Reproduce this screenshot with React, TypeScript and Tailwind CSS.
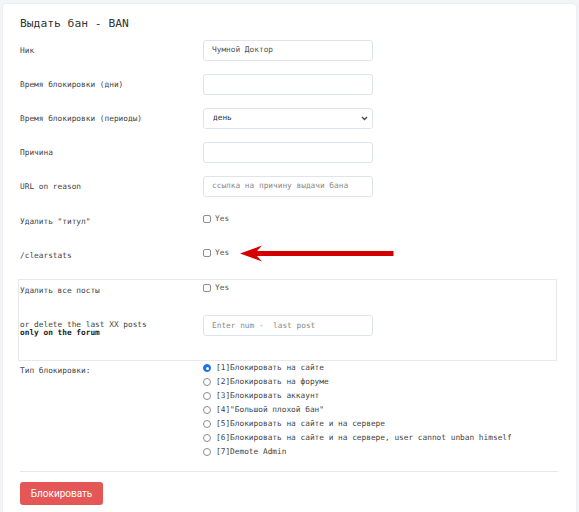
import React from "react";

const mono = "font-['DejaVu_Sans_Mono','Liberation_Mono',monospace]";

const banTypes = [
  "[1]Блокировать на сайте",
  "[2]Блокировать на форуме",
  "[3]Блокировать аккаунт",
  "[4]\"Большой плохой бан\"",
  "[5]Блокировать на сайте и на сервере",
  "[6]Блокировать на сайте и на сервере, user cannot unban himself",
  "[7]Demote Admin",
];

function Field({ value, placeholder }: { value?: string; placeholder?: string }) {
  return (
    <div className="w-[170px] h-[21px] border border-[#dfe3ea] rounded-[3px] bg-white flex items-center pl-[8px]">
      {value ? (
        <span className="text-[#555]">{value}</span>
      ) : placeholder ? (
        <span className="text-[#8a8a8a] whitespace-pre">{placeholder}</span>
      ) : null}
    </div>
  );
}

function Check() {
  return (
    <div className="flex items-center gap-[4px] h-[10px] leading-[10px]">
      <span className="w-[8px] h-[8px] border border-[#8d8d8d] rounded-[2px] bg-white" />
      <span className="text-[#555]">Yes</span>
    </div>
  );
}

function Row({ label, children, check }: { label: string; children: React.ReactNode; check?: boolean }) {
  return (
    <div className="grid grid-cols-[183px_1fr] h-[34px] items-center">
      <span className={check ? "mt-[4px] text-[#444]" : "mt-[1px] text-[#444]"}>{label}</span>
      <div className={check ? "-mt-[2px]" : ""}>{children}</div>
    </div>
  );
}

export default function App() {
  return (
    <div className={`relative min-h-screen bg-[#f3f4f7] pt-[3px] px-[2px] ${mono} text-[7.8px]`}>
      <div className="bg-white w-[575px] border border-[#eceef2] rounded-[4px] pl-[17px] pr-[18px] pt-[7px] pb-[10px]">
        <h1 className="h-[22px] leading-[22px] text-[11.3px] text-[#333] mt-[2px] -mb-[2px]">Выдать бан - BAN</h1>

        <Row label="Ник">
          <Field value="Чумной Доктор" />
        </Row>
        <Row label="Время блокировки (дни)">
          <Field />
        </Row>
        <Row label="Время блокировки (периоды)">
          <div className="w-[170px] h-[21px] border border-[#dfe3ea] rounded-[3px] bg-white flex items-center justify-between pl-[9px] pr-[4px]">
            <span className="text-[#333]">день</span>
            <svg width="7" height="5" viewBox="0 0 7 5">
              <path d="M1 1l2.5 2.5L6 1" fill="none" stroke="#444" strokeWidth="1.3" />
            </svg>
          </div>
        </Row>
        <Row label="Причина">
          <Field />
        </Row>
        <Row label="URL on reason">
          <Field placeholder="ссылка на причину выдачи бана" />
        </Row>
        <Row label='Удалить "титул"' check>
          <Check />
        </Row>
        <Row label="/clearstats" check>
          <Check />
        </Row>

        <div className="mt-[8px] -ml-[2px] w-[539px] border border-[#e6e8ec] pl-[1px] pt-[4px] pb-[23px]">
          <div className="grid grid-cols-[183px_1fr] items-start">
            <span className="mt-[2px] leading-[10px] text-[#444]">Удалить все посты</span>
            <div className="-mt-[1px]">
              <Check />
            </div>
          </div>
          <div className="grid grid-cols-[183px_1fr] items-start mt-[19px]">
            <div className="mt-[6px] leading-[8px]">
              <div className="text-[#444]">or delete the last XX posts</div>
              <div className="font-bold text-[#222]">only on the forum</div>
            </div>
            <Field placeholder="Enter num -  last post" />
          </div>
        </div>

        <div className="grid grid-cols-[183px_1fr]">
          <span className="mt-[5px] leading-[10px] text-[#444]">Тип блокировки:</span>
          <div className="flex flex-col">
            {banTypes.map((t, i) => (
              <div key={t} className="flex items-center gap-[5px] h-[14px]">
                {i === 0 ? (
                  <span className="w-[8px] h-[8px] rounded-full bg-[#1a73e8] border border-[#1a73e8] flex items-center justify-center">
                    <span className="w-[3px] h-[3px] rounded-full bg-white" />
                  </span>
                ) : (
                  <span className="w-[8px] h-[8px] rounded-full border border-[#8d8d8d] bg-white" />
                )}
                <span className="text-[#444] whitespace-pre">{t}</span>
              </div>
            ))}
          </div>
        </div>

        <div className="mt-[12px] border-t border-[#e6e8ec]" />

        <button className="mt-[10px] w-[83px] h-[23px] rounded-[3px] bg-[#e45756] text-white text-[10px] font-['Roboto',sans-serif]">
          Блокировать
        </button>
      </div>

      <svg className="absolute left-[238px] top-[244px]" width="158" height="20" viewBox="238 244 158 20">
        <path d="M240 253.5 L262 245.5 L257 251 L393.5 251 L393.5 256 L257 256 L262 261.5 Z" fill="#d40000" />
      </svg>
    </div>
  );
}
